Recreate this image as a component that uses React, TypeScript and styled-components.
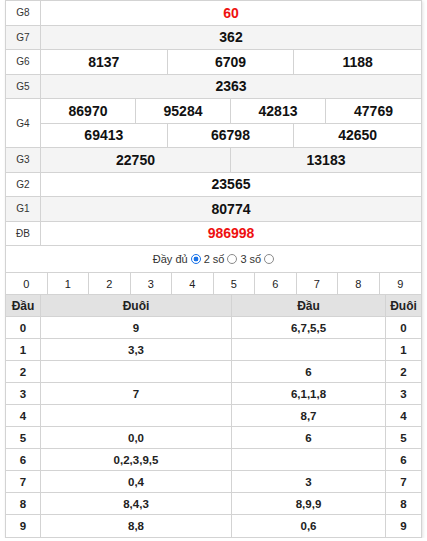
import React from "react";
import styled, { createGlobalStyle } from "styled-components";

const Global = createGlobalStyle`
  html, body { margin: 0; padding: 0; background: #fff; }
  body { font-family: "Liberation Sans", Arial, sans-serif; color: #000; }
  * { box-sizing: border-box; }
`;

const Box = styled.div`
  margin-left: 5px;
  width: 417px;
  border: 1px solid #d3d3d3;
  box-shadow: 1px 1px 3px rgba(0, 0, 0, 0.12);
  background: #fff;
`;

const PrizeRow = styled.div<{ $alt?: boolean }>`
  display: grid;
  grid-template-columns: 35px 1fr;
  background: ${(p) => (p.$alt ? "#f4f4f4" : "#fff")};
  border-bottom: 1px solid #d3d3d3;
`;

const Label = styled.div`
  display: flex;
  align-items: center;
  justify-content: center;
  border-right: 1px solid #d3d3d3;
  font-size: 10px;
  color: #333;
`;

const Values = styled.div`
  display: flex;
  flex-direction: column;
`;

const ValueLine = styled.div<{ $n: number; $last?: boolean }>`
  display: grid;
  grid-template-columns: repeat(${(p) => p.$n}, 1fr);
  height: ${(p) => (p.$last ? "23.5px" : "24.5px")};
  border-bottom: ${(p) => (p.$last ? "none" : "1px solid #d3d3d3")};
`;

const Num = styled.div<{ $red?: boolean }>`
  display: flex;
  align-items: center;
  justify-content: center;
  font-size: 14px;
  font-weight: bold;
  color: ${(p) => (p.$red ? "#ee1111" : "#111")};
  border-right: 1px solid #d3d3d3;
  &:last-child { border-right: none; }
`;

const Options = styled.div`
  height: 26px;
  display: flex;
  align-items: center;
  justify-content: center;
  gap: 3px;
  font-size: 11px;
  color: #333;
`;

const Opt = styled.label`
  display: inline-flex;
  align-items: center;
  gap: 1px;
`;

const Radio = styled.span<{ $on?: boolean }>`
  display: inline-block;
  width: 10px;
  height: 10px;
  border-radius: 50%;
  border: 1px solid ${(p) => (p.$on ? "#1a73e8" : "#8a8a8a")};
  background: ${(p) => (p.$on ? "radial-gradient(circle, #1a73e8 0 2.4px, #fff 2.6px)" : "#fff")};
  margin-left: 2px;
`;

const Digits = styled.div`
  display: grid;
  grid-template-columns: repeat(10, 1fr);
  border-top: 1px solid #d3d3d3;
  border-bottom: 1px solid #d3d3d3;
  height: 23px;
`;

const Digit = styled.div`
  display: flex;
  align-items: center;
  justify-content: center;
  font-size: 11px;
  color: #222;
  border-right: 1px solid #d3d3d3;
  &:last-child { border-right: none; }
`;

const LotoRow = styled.div<{ $head?: boolean }>`
  display: grid;
  grid-template-columns: 35px 191px 154px 1fr;
  height: 22px;
  background: ${(p) => (p.$head ? "#e2e2e2" : "#fff")};
  border-bottom: 1px solid #d3d3d3;
  &:last-child { border-bottom: none; }
`;

const Cell = styled.div<{ $head?: boolean }>`
  display: flex;
  align-items: center;
  justify-content: center;
  font-size: ${(p) => (p.$head ? "12px" : "11.5px")};
  font-weight: bold;
  color: #222;
  border-right: 1px solid #d3d3d3;
  &:last-child { border-right: none; }
`;

type Prize = { label: string; lines: string[][]; red?: boolean };

const prizes: Prize[] = [
  { label: "G8", lines: [["60"]], red: true },
  { label: "G7", lines: [["362"]] },
  { label: "G6", lines: [["8137", "6709", "1188"]] },
  { label: "G5", lines: [["2363"]] },
  { label: "G4", lines: [["86970", "95284", "42813", "47769"], ["69413", "66798", "42650"]] },
  { label: "G3", lines: [["22750", "13183"]] },
  { label: "G2", lines: [["23565"]] },
  { label: "G1", lines: [["80774"]] },
  { label: "ĐB", lines: [["986998"]], red: true },
];

const loto: [string, string, string, string][] = [
  ["0", "9", "6,7,5,5", "0"],
  ["1", "3,3", "", "1"],
  ["2", "", "6", "2"],
  ["3", "7", "6,1,1,8", "3"],
  ["4", "", "8,7", "4"],
  ["5", "0,0", "6", "5"],
  ["6", "0,2,3,9,5", "", "6"],
  ["7", "0,4", "3", "7"],
  ["8", "8,4,3", "8,9,9", "8"],
  ["9", "8,8", "0,6", "9"],
];

export default function App() {
  return (
    <>
      <Global />
      <Box>
        {prizes.map((p, i) => (
          <PrizeRow key={p.label} $alt={i % 2 === 1}>
            <Label>{p.label}</Label>
            <Values>
              {p.lines.map((line, li) => (
                <ValueLine key={li} $n={line.length} $last={li === p.lines.length - 1}>
                  {line.map((n) => (
                    <Num key={n} $red={p.red}>{n}</Num>
                  ))}
                </ValueLine>
              ))}
            </Values>
          </PrizeRow>
        ))}
        <Options>
          <Opt>Đầy đủ<Radio $on /></Opt>
          <Opt>2 số<Radio /></Opt>
          <Opt>3 số<Radio /></Opt>
        </Options>
        <Digits>
          {Array.from({ length: 10 }, (_, d) => (
            <Digit key={d}>{d}</Digit>
          ))}
        </Digits>
        <LotoRow $head>
          <Cell $head>Đầu</Cell>
          <Cell $head>Đuôi</Cell>
          <Cell $head>Đầu</Cell>
          <Cell $head>Đuôi</Cell>
        </LotoRow>
        {loto.map((r) => (
          <LotoRow key={r[0]}>
            {r.map((c, ci) => (
              <Cell key={ci}>{c}</Cell>
            ))}
          </LotoRow>
        ))}
      </Box>
    </>
  );
}
